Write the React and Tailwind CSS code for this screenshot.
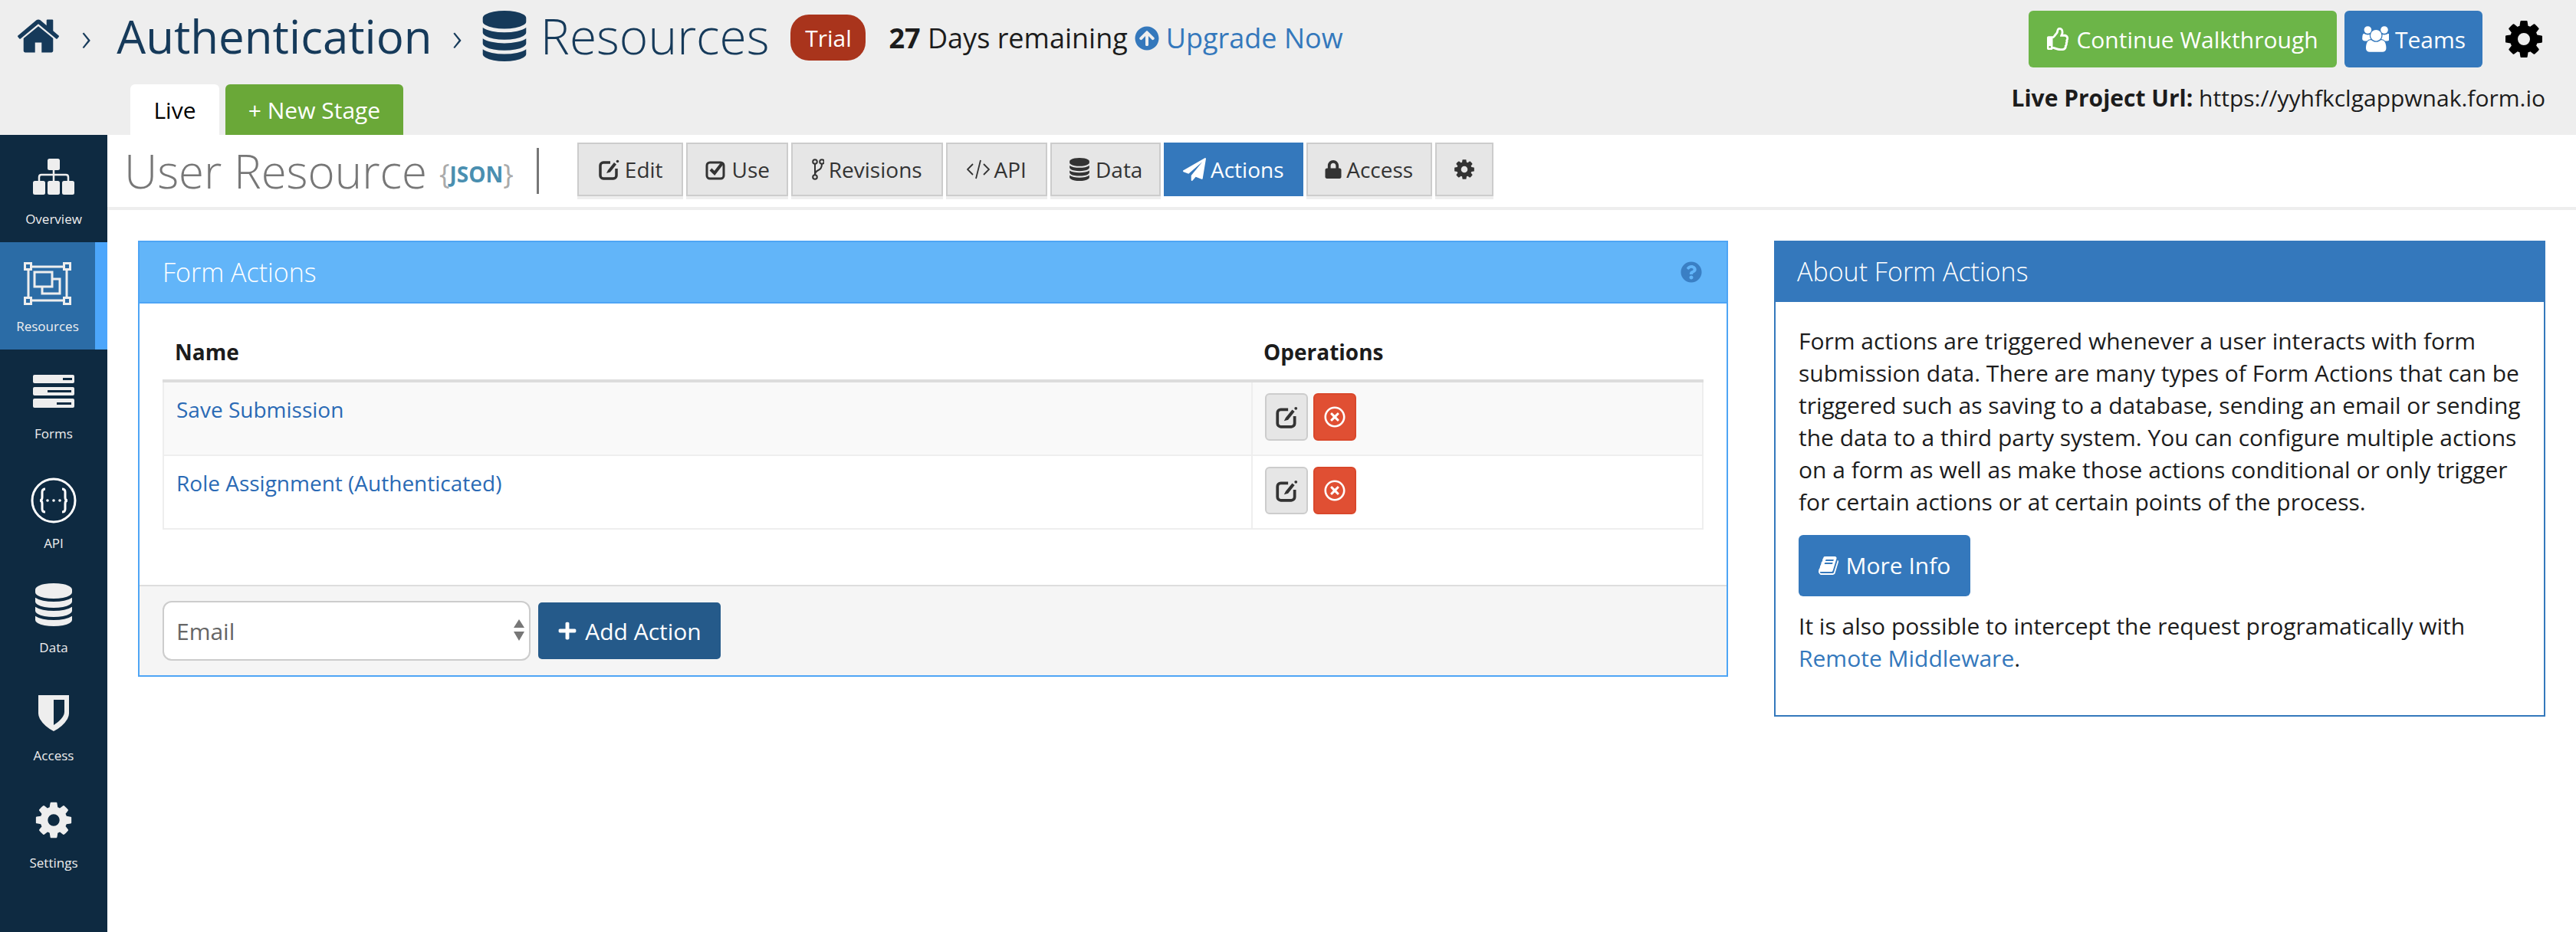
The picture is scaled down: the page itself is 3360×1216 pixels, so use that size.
import React from "react";
import { FaLock, FaRegThumbsUp, FaArrowCircleUp, FaQuestionCircle, FaRegTimesCircle, FaPlus } from "react-icons/fa";

const P = {
  home: "M1472 992v480q0 26-19 45t-45 19h-384v-384h-256v384h-384q-26 0-45-19t-19-45v-480q0-1 .5-3t.5-3l575-474 575 474q1 2 1 6zm223-69l-62 74q-8 9-21 11h-3q-13 0-21-7l-692-577-692 577q-12 8-24 7-13-2-21-11l-62-74q-8-10-7-23.500t11-21.500l719-599q32-26 76-26t76 26l244 204v-195q0-14 9-23t23-9h192q14 0 23 9t9 23v408l219 182q10 8 11 21.500t-7 23.500z",
  cog: "M1152 896q0-106-75-181t-181-75-181 75-75 181 75 181 181 75 181-75 75-181zm512-109v222q0 12-8 23t-20 13l-185 28q-19 54-39 91 35 50 107 138 10 12 10 25t-9 23q-27 37-99 108t-94 71q-12 0-26-9l-138-108q-44 23-91 38-16 136-29 186-7 28-36 28h-222q-14 0-24.500-8.500t-11.500-21.500l-28-184q-49-16-90-37l-141 107q-10 9-25 9-14 0-25-11-126-114-165-168-7-10-7-23 0-12 8-23 15-21 51-66.500t54-70.500q-27-50-41-99l-183-27q-13-2-21-12.500t-8-23.500v-222q0-12 8-23t19-13l186-28q14-46 39-92-40-57-107-138-10-12-10-24 0-10 9-23 26-36 98.500-107.500t94.500-71.500q13 0 26 10l138 107q44-23 91-38 16-136 29-186 7-28 36-28h222q14 0 24.500 8.500t11.500 21.500l28 184q49 16 90 37l142-107q9-9 24-9 13 0 25 10 129 119 165 170 7 8 7 22 0 12-8 23-15 21-51 66.500t-54 70.500q26 50 41 98l183 28q13 2 21 12.500t8 23.500z",
  db: "M896 768q237 0 443-43t325-127v170q0 69-103 128t-280 93.500-385 34.500-385-34.500-280-93.500-103-128v-170q119 84 325 127t443 43zm0 768q237 0 443-43t325-127v170q0 69-103 128t-280 93.500-385 34.500-385-34.500-280-93.500-103-128v-170q119 84 325 127t443 43zm0-384q237 0 443-43t325-127v170q0 69-103 128t-280 93.500-385 34.500-385-34.500-280-93.500-103-128v-170q119 84 325 127t443 43zm0-1152q208 0 385 34.500t280 93.500 103 128v128q0 69-103 128t-280 93.500-385 34.500-385-34.500-280-93.500-103-128v-128q0-69 103-128t280-93.500 385-34.500z",
  plane: "M1764 11q33 24 27 64l-256 1536q-5 29-32 45-14 8-31 8-11 0-24-5l-453-185-242 295q-18 23-49 23-13 0-22-4-19-7-30.500-23.500t-11.500-36.500v-349l864-1059-1069 925-395-162q-37-14-40-55-2-40 32-59l1664-960q15-9 32-9 20 0 36 11z",
  book: "M1639 478q40 57 18 129l-275 906q-19 64-76.500 107.500t-122.500 43.500h-923q-77 0-148.500-53.500t-99.500-131.500q-24-67-2-127 0-4 3-27t4-37q1-8-3-21.500t-3-19.500q2-11 8-21t16.500-23.500 16.500-23.500q23-38 45-91.500t30-91.500q3-10 .5-30t-.5-28q3-11 17-28t17-23q21-36 42-92t25-90q1-9-2.500-32t.5-28q4-13 22-30.500t22-22.500q19-26 42.500-84.500t27.500-96.500q1-8-3-25.500t-2-26.500q2-8 9-18t18-23 17-21q8-12 16.500-30.500t15-35 16-36 19.500-32 26.500-23.500 36-11.500 47.500 5.500l-1 3q38-9 51-9h761q74 0 114 56t18 130l-274 906q-36 119-71.500 153.500t-128.500 34.500h-869q-27 0-38 15-11 16-1 43 24 70 144 70h923q29 0 56-15.500t35-41.500l300-987q7-22 5-57 38 15 59 43zm-1064 2q-4 13 2 22.500t20 9.500h608q13 0 25.500-9.500t16.500-22.500l21-64q4-13-2-22.500t-20-9.500h-608q-13 0-25.500 9.500t-16.500 22.500zm-83 256q-4 13 2 22.500t20 9.500h608q13 0 25.500-9.500t16.500-22.500l21-64q4-13-2-22.500t-20-9.500h-608q-13 0-25.500 9.500t-16.500 22.500z",
  users: "M657 896q-162 5-265 128h-134q-82 0-138-40.500t-56-118.500q0-353 124-353 6 0 43.500 21t97.500 42.500 119 21.500q67 0 133-23-5 37-5 66 0 139 81 256zm1071 637q0 120-73 189.500t-194 69.500h-874q-121 0-194-69.500t-73-189.500q0-53 3.500-103.500t14-109 26.500-108.500 43-97.500 62-81 85.500-53.500 111.500-20q10 0 43 21.500t73 48 107 48 135 21.500 135-21.500 107-48 73-48 43-21.500q61 0 111.500 20t85.500 53.500 62 81 43 97.500 26.500 108.500 14 109 3.500 103.500zm-1024-1277q0 106-75 181t-181 75-181-75-75-181 75-181 181-75 181 75 75 181zm704 384q0 159-112.500 271.500t-271.500 112.500-271.500-112.500-112.500-271.500 112.500-271.500 271.500-112.500 271.500 112.500 112.500 271.500zm576 225q0 78-56 118.500t-138 40.500h-134q-103-123-265-128 81-117 81-256 0-29-5-66 66 23 133 23 59 0 119-21.500t97.500-42.500 43.500-21q124 0 124 353zm-128-609q0 106-75 181t-181 75-181-75-75-181 75-181 181-75 181 75 75 181z",
};

function Fa({ d, className, vb = "0 0 1792 1792" }) {
  return <svg viewBox={vb} className={className} fill="currentColor"><path d={d} /></svg>;
}

function EditIcon({ className }) {
  return (
    <svg viewBox="0 0 30 30" className={className} fill="none" stroke="currentColor">
      <path d="M17 6H8a4 4 0 0 0-4 4v13a4 4 0 0 0 4 4h13a4 4 0 0 0 4-4v-9" strokeWidth="3.500" />
      <path d="M12 20l2-4 8-10 3 2.500-8 10z" fill="currentColor" stroke="none" />
      <circle cx="26.500" cy="4.500" r="1.800" fill="currentColor" stroke="none" />
    </svg>
  );
}
function CheckBoxIcon({ className }) {
  return (
    <svg viewBox="0 0 30 30" className={className} fill="none" stroke="currentColor">
      <rect x="4" y="6" width="22" height="21" rx="4" strokeWidth="3" />
      <path d="M9 15l5 5 10-13" strokeWidth="4" />
    </svg>
  );
}
function OverviewIcon() {
  return (
    <svg viewBox="0 0 54 47" className="w-[54px] h-[47px]" fill="#eee">
      <rect x="19" y="0" width="16" height="15" rx="2.5" />
      <rect x="0" y="29" width="16" height="18" rx="2.5" />
      <rect x="19" y="29" width="16" height="18" rx="2.5" />
      <rect x="38" y="29" width="16" height="18" rx="2.5" />
      <path d="M27 14v15M8 29v-5q0-3 3-3h32q3 0 3 3v5" stroke="#eee" strokeWidth="2.500" fill="none" />
    </svg>
  );
}
function ResourcesIcon() {
  return (
    <svg viewBox="0 0 62 56" className="w-[62px] h-[56px]" fill="none" stroke="#eee" strokeWidth="3">
      <rect x="6" y="6" width="50" height="44" />
      <rect x="1.500" y="1.500" width="8" height="8" fill="#2b6ca6" />
      <rect x="52.500" y="1.500" width="8" height="8" fill="#2b6ca6" />
      <rect x="1.500" y="46.500" width="8" height="8" fill="#2b6ca6" />
      <rect x="52.500" y="46.500" width="8" height="8" fill="#2b6ca6" />
      <rect x="24" y="22" width="23" height="19" />
      <rect x="14" y="13" width="23" height="19" fill="#2b6ca6" />
    </svg>
  );
}
function FormsIcon() {
  return (
    <svg viewBox="0 0 54 43" className="w-[54px] h-[43px]">
      <rect x="0" y="0" width="54" height="11" rx="2" fill="#eee" />
      <rect x="0" y="16" width="54" height="11" rx="2" fill="#eee" />
      <rect x="0" y="31" width="54" height="12" rx="2" fill="#eee" />
      <rect x="39" y="4" width="12" height="3" fill="#0e2a41" />
      <rect x="19" y="20" width="31" height="3" fill="#0e2a41" />
      <rect x="31" y="36" width="19" height="3" fill="#0e2a41" />
    </svg>
  );
}
function ApiIcon() {
  return (
    <svg viewBox="0 0 60 60" className="w-[60px] h-[60px]" fill="none" stroke="#fff">
      <circle cx="30" cy="30" r="28" strokeWidth="3" />
      <path d="M19 15q-4 0-4 4v7q0 4-3 4 3 0 3 4v7q0 4 4 4M41 15q4 0 4 4v7q0 4 3 4-3 0-3 4v7q0 4-4 4" strokeWidth="3" />
      <circle cx="22" cy="30" r="1.800" fill="#fff" stroke="none" />
      <circle cx="30" cy="30" r="1.800" fill="#fff" stroke="none" />
      <circle cx="38" cy="30" r="1.800" fill="#fff" stroke="none" />
    </svg>
  );
}
function ShieldIcon() {
  return (
    <svg viewBox="0 0 40 47" className="w-[40px] h-[47px]">
      <path fillRule="evenodd" fill="#eee" d="M0 0h40v24q0 3-2 7-6 10-18 16Q8 41 2 31q-2-4-2-7zM20 6v33q8-5 12-11 2-3 2-6V6z" />
    </svg>
  );
}
function CodeIcon() {
  return (
    <svg viewBox="0 0 30 26" className="w-[30px] h-[26px]" fill="none" stroke="currentColor" strokeWidth="1.800">
      <path d="M8 6l-7 7 7 7M22 6l7 7-7 7M18 1l-6 24" />
    </svg>
  );
}
function ForkIcon() {
  return (
    <svg viewBox="0 0 16 28" className="w-[16px] h-[28px]" fill="none" stroke="currentColor" strokeWidth="2">
      <circle cx="4" cy="4" r="2.800" />
      <circle cx="13" cy="4" r="2.800" />
      <circle cx="4" cy="24" r="2.800" />
      <path d="M4 7v14M13 7q0 6-4.500 8T4 21" />
    </svg>
  );
}

const NAV = [
  { label: "Overview", icon: <OverviewIcon />, pt: "pt-[10px]" },
  { label: "Resources", icon: <ResourcesIcon />, pt: "pt-[10px]", active: true },
  { label: "Forms", icon: <FormsIcon />, pt: "pt-[10px]" },
  { label: "API", icon: <ApiIcon />, pt: "pt-[13px]" },
  { label: "Data", icon: <Fa d={P.db} className="w-[56px] h-[56px] text-[#eee]" />, pt: "pt-[9px]" },
  { label: "Access", icon: <ShieldIcon />, pt: "pt-[10px]" },
  { label: "Settings", icon: <Fa d={P.cog} className="w-[54px] h-[54px] text-[#eee]" />, pt: "pt-[10px]" },
];

function SideItem({ item }) {
  return (
    <div className={`relative h-[140px] flex flex-col items-center text-[#eee] ${item.pt} ${item.active ? "bg-[#2b6ca6] pr-[16px]" : ""}`}>
      <div className="h-[88px] flex items-center justify-center">{item.icon}</div>
      <div className="text-[17px] leading-[24px] font-medium">{item.label}</div>
      {item.active && <div className="absolute right-0 top-0 bottom-0 w-[16px] bg-[#4ca6fb]" />}
    </div>
  );
}

function Tab({ w, active, children }) {
  return (
    <div className="flex flex-col" style={{ width: w }}>
      <div className={`h-[70px] flex items-center justify-center gap-[6px] text-[28px] ${active ? "bg-[#3478bc] text-white" : "bg-[#e6e6e6] text-[#333] border-2 border-[#ccc]"}`}>
        {children}
      </div>
      <div className={`h-[4px] ${active ? "bg-white" : "bg-[#eee]"}`} />
    </div>
  );
}

function Row({ name, striped }) {
  return (
    <div className={`flex h-[96px] border-x-2 border-b-2 border-[#eee] ${striped ? "bg-[#f9f9f9]" : "bg-white"}`}>
      <div className="w-[1420px] border-r-2 border-[#eee] pl-[16px] pt-[14px] text-[28px] leading-[42px] text-[#2a6ab5]">{name}</div>
      <div className="flex gap-[7px] pl-[16px] pt-[14px] items-start">
        <div className="w-[56px] h-[62px] rounded-[6px] bg-[#e6e6e6] border-2 border-[#ccc] flex items-center justify-center">
          <EditIcon className="w-[32px] h-[32px] text-[#333]" />
        </div>
        <div className="w-[56px] h-[62px] rounded-[6px] bg-[#e04f33] border-2 border-[#d9472b] flex items-center justify-center">
          <FaRegTimesCircle className="w-[28px] h-[28px] text-white" />
        </div>
      </div>
    </div>
  );
}

export default function App() {
  return (
    <div className="w-[3360px] h-[1216px] overflow-hidden flex flex-col bg-white text-[#1c1c1c] font-['Open_Sans',sans-serif]">
      <header className="h-[176px] bg-[#eeeeee] flex flex-col">
        <div className="h-[110px] flex justify-between items-start pr-[40px]">
          <div className="flex items-center h-[94px] pl-[20px]">
            <Fa d={P.home} className="w-[60px] h-[60px] text-[#163a5a]" />
            <span className="ml-[26px] text-[52px] font-light text-[#163a5a] leading-none">›</span>
            <span className="ml-[33px] text-[60px] leading-none text-[#163a5a]">Authentication</span>
            <span className="ml-[26px] text-[52px] font-light text-[#163a5a] leading-none">›</span>
            <Fa d={P.db} className="ml-[22px] w-[66px] h-[66px] text-[#163a5a]" />
            <span className="ml-[14px] text-[64px] leading-none font-light text-[#163a5a]">Resources</span>
            <span className="ml-[28px] mt-[4px] h-[60px] w-[98px] rounded-[24px] bg-[#a9341c] text-white text-[30px] flex items-center justify-center">Trial</span>
            <span className="ml-[30px] mt-[6px] text-[36px]"><b>27</b> Days remaining</span>
            <FaArrowCircleUp className="ml-[9px] mt-[6px] w-[32px] h-[32px] text-[#3478bc]" />
            <span className="ml-[9px] mt-[6px] text-[36px] text-[#3478bc]">Upgrade Now</span>
          </div>
          <div className="flex items-center mt-[14px]">
            <div className="w-[402px] h-[74px] rounded-[6px] bg-[#6cb548] text-white text-[30px] flex items-center justify-center gap-[8px]">
              <FaRegThumbsUp className="w-[30px] h-[30px]" />Continue Walkthrough
            </div>
            <div className="ml-[10px] w-[180px] h-[74px] rounded-[6px] bg-[#3478bc] text-white text-[30px] flex items-center justify-center gap-[8px]">
              <Fa d={P.users} vb="0 0 1920 1792" className="w-[36px] h-[36px]" />Teams
            </div>
            <Fa d={P.cog} className="ml-[26px] w-[56px] h-[56px] text-black" />
          </div>
        </div>
        <div className="h-[66px] flex justify-between pl-[170px] pr-[40px]">
          <div className="flex gap-[8px]">
            <div className="w-[116px] bg-white rounded-t-[6px] text-[30px] text-black flex items-center justify-center">Live</div>
            <div className="w-[232px] bg-[#6aa838] rounded-t-[6px] text-[30px] text-white flex items-center justify-center">+ New Stage</div>
          </div>
          <div className="text-[30px] leading-[42px] -mt-[3px]"><b>Live Project Url:</b> https://yyhfkclgappwnak.form.io</div>
        </div>
      </header>
      <div className="flex flex-1">
        <nav className="w-[140px] bg-[#0e2a41] shrink-0">
          {NAV.map((n) => <SideItem key={n.label} item={n} />)}
        </nav>
        <main className="flex-1 flex flex-col">
          <div className="h-[98px] border-b-4 border-[#eee] flex items-start pl-[22px]">
            <div className="flex items-center h-[94px]">
              <span className="text-[60px] font-light text-[#777] leading-none">User Resource</span>
              <span className="ml-[16px] mt-[8px] text-[36px] font-normal text-[#aaa] leading-none flex items-center">{"{"}<span className="text-[#4a8fb0] font-bold text-[28px]">JSON</span>{"}"}</span>
              <div className="ml-[30px] w-[3px] h-[60px] bg-[#777]" />
            </div>
            <div className="ml-[50px] mt-[10px] flex gap-[4px]">
              <Tab w={138}><EditIcon className="w-[30px] h-[30px]" />Edit</Tab>
              <Tab w={133}><CheckBoxIcon className="w-[30px] h-[30px]" />Use</Tab>
              <Tab w={198}><ForkIcon />Revisions</Tab>
              <Tab w={132}><CodeIcon />API</Tab>
              <Tab w={144}><Fa d={P.db} className="w-[30px] h-[30px]" />Data</Tab>
              <Tab w={182} active><Fa d={P.plane} className="w-[30px] h-[30px]" />Actions</Tab>
              <Tab w={164}><FaLock className="w-[22px] h-[24px]" />Access</Tab>
              <Tab w={76}><Fa d={P.cog} className="w-[30px] h-[30px]" /></Tab>
            </div>
          </div>
          <div className="flex gap-[60px] pt-[40px] pl-[40px] pr-[40px] items-start">
            <section className="w-[2074px] border-2 border-[#4ea5f5]">
              <div className="h-[78px] bg-[#62b5f9] flex items-center justify-between pl-[30px] pr-[32px]">
                <span className="text-[34px] font-light text-white">Form Actions</span>
                <FaQuestionCircle className="w-[28px] h-[28px] text-[#3a7fc4]" />
              </div>
              <div className="h-[369px] px-[30px] pt-[42px] border-t-2 border-[#4ea5f5]">
                <div className="flex h-[61px] text-[28px] font-bold pb-[2px] border-b-4 border-[#ddd] leading-[42px]">
                  <div className="w-[1436px] pl-[16px]">Name</div>
                  <div>Operations</div>
                </div>
                <Row name="Save Submission" striped />
                <Row name="Role Assignment (Authenticated)" />
              </div>
              <div className="h-[118px] bg-[#f5f5f5] border-t-2 border-[#ddd] flex items-center px-[30px]">
                <div className="relative w-[480px] h-[78px]">
                  <select className="w-full h-full appearance-none rounded-[12px] bg-white border-2 border-[#ccc] pl-[16px] text-[30px] text-[#666] outline-none" defaultValue="Email">
                    <option>Email</option>
                  </select>
                  <svg viewBox="0 0 14 28" className="absolute right-[8px] top-[24px] w-[14px] h-[28px]" fill="#777">
                    <path d="M7 0l7 11H0zM0 16h14L7 28z" />
                  </svg>
                </div>
                <div className="ml-[10px] w-[238px] h-[74px] rounded-[5px] bg-[#255a8a] text-white text-[30px] flex items-center justify-center gap-[10px]">
                  <FaPlus className="w-[26px] h-[26px]" />Add Action
                </div>
              </div>
            </section>
            <section className="w-[1006px] border-2 border-[#3478bc]">
              <div className="h-[80px] bg-[#3478bc] flex items-center pl-[30px] -mx-[2px] -mt-[2px]">
                <span className="text-[34px] font-light text-white">About Form Actions</span>
              </div>
              <div className="h-[539px] px-[30px] pt-[30px] text-[30px] leading-[42px]">
                <p>Form actions are triggered whenever a user interacts with form submission data. There are many types of Form Actions that can be triggered such as saving to a database, sending an email or sending the data to a third party system. You can configure multiple actions on a form as well as make those actions conditional or only trigger for certain actions or at certain points of the process.</p>
                <div className="mt-[22px] w-[224px] h-[80px] rounded-[6px] bg-[#3478bc] text-white flex items-center justify-center gap-[8px]">
                  <Fa d={P.book} className="w-[28px] h-[28px]" />More Info
                </div>
                <p className="mt-[18px]">It is also possible to intercept the request programatically with <span className="text-[#3478bc]">Remote Middleware</span>.</p>
              </div>
            </section>
          </div>
        </main>
      </div>
    </div>
  );
}
